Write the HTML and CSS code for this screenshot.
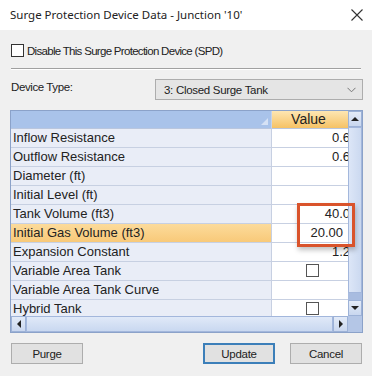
FILE: index.html
```html
<!DOCTYPE html>
<html lang="en">
<head>
    <meta charset="UTF-8">
    <title>Surge Protection Device Data</title>
    <link rel="stylesheet" href="styles.css">
</head>
<body>
    <div class="window">
        <header class="titlebar">
            <span>Surge Protection Device Data - Junction '10'</span>
            <svg class="close" width="12" height="12" viewBox="0 0 12 12">
                <path d="M0.5 0.5 L11.5 11.5 M11.5 0.5 L0.5 11.5" stroke="#333" stroke-width="1.1" fill="none"/>
            </svg>
        </header>

        <div class="content">
            <label class="spd">
                <span class="box"></span>
                Disable This Surge Protection Device (SPD)
            </label>

            <div class="sep"></div>

            <div class="type-row">
                <span class="type-label">Device Type:</span>
                <div class="select">
                    <span>3: Closed Surge Tank</span>
                    <svg width="9" height="6" viewBox="0 0 9 6">
                        <path d="M0.5 0.8 L4.5 4.8 L8.5 0.8" stroke="#777" stroke-width="1" fill="none"/>
                    </svg>
                </div>
            </div>

            <!-- Grilla de propiedades -->
            <div class="grid">
                <div class="grid-body">
                    <div class="grid-view">
                        <div class="table">
                            <div class="row head">
                                <div class="cell name"><span class="sort"></span></div>
                                <div class="cell value">Value</div>
                            </div>
                            <div class="row">
                                <div class="cell name">Inflow Resistance</div>
                                <div class="cell value">0.6</div>
                            </div>
                            <div class="row">
                                <div class="cell name">Outflow Resistance</div>
                                <div class="cell value">0.6</div>
                            </div>
                            <div class="row">
                                <div class="cell name">Diameter (ft)</div>
                                <div class="cell value"></div>
                            </div>
                            <div class="row">
                                <div class="cell name">Initial Level (ft)</div>
                                <div class="cell value"></div>
                            </div>
                            <div class="row">
                                <div class="cell name">Tank Volume (ft3)</div>
                                <div class="cell value">40.0</div>
                            </div>
                            <div class="row selected">
                                <div class="cell name">Initial Gas Volume (ft3)</div>
                                <div class="cell value editing">20.00</div>
                            </div>
                            <div class="row">
                                <div class="cell name">Expansion Constant</div>
                                <div class="cell value">1.2</div>
                            </div>
                            <div class="row">
                                <div class="cell name">Variable Area Tank</div>
                                <div class="cell value check"><span class="box"></span></div>
                            </div>
                            <div class="row">
                                <div class="cell name">Variable Area Tank Curve</div>
                                <div class="cell value"></div>
                            </div>
                            <div class="row">
                                <div class="cell name">Hybrid Tank</div>
                                <div class="cell value check"><span class="box"></span></div>
                            </div>
                        </div>
                    </div>
                    <div class="vscroll">
                        <div class="sb-btn"><span class="arrow up"></span></div>
                        <div class="sb-thumb"></div>
                        <div class="sb-track"></div>
                        <div class="sb-btn"><span class="arrow down"></span></div>
                    </div>
                </div>
                <div class="hscroll">
                    <div class="sb-btn"><span class="arrow left"></span></div>
                    <div class="sb-thumb"></div>
                    <div class="sb-btn"><span class="arrow right"></span></div>
                    <div class="corner"></div>
                </div>
                <div class="mark"></div>
            </div>

            <div class="buttons">
                <button>Purge</button>
                <span class="spacer"></span>
                <button class="default">Update</button>
                <button>Cancel</button>
            </div>
        </div>
    </div>
</body>
</html>
```

FILE: styles.css
```css
/* Ventana */
body {
    margin: 0;
    font-family: 'Liberation Sans', Arial, sans-serif;
    font-size: 11px;
    letter-spacing: -0.2px;
    color: #222;
    background: #f0f0f0;
}

.window {
    width: 372px;
    height: 376px;
    background: #f0f0f0;
}

.titlebar {
    height: 30px;
    background: #fff;
    display: flex;
    align-items: center;
    justify-content: space-between;
    padding: 0 9px 1px 10px;
    box-sizing: border-box;
    font-family: 'Noto Sans', sans-serif;
    font-size: 11.5px;
    letter-spacing: 0;
    color: #222;
}

.content {
    padding: 14px 10px 0 11px;
}

/* Checkbox superior */
.spd {
    display: flex;
    align-items: center;
    height: 13px;
    gap: 3px;
    font-size: 11.5px;
    letter-spacing: -0.7px;
}

.box {
    display: inline-block;
    width: 11px;
    height: 11px;
    border: 1px solid #333;
    background: #fff;
}

.sep {
    margin-top: 11px;
    height: 1px;
    background: #a0a0a0;
    border-bottom: 1px solid #fff;
    margin-right: 1px;
}

.type-row {
    margin-top: 9px;
    display: flex;
    align-items: center;
    justify-content: space-between;
}

.type-label {
    padding-bottom: 5px;
    font-size: 11.5px;
    letter-spacing: -0.4px;
}

.select {
    width: 208px;
    height: 21px;
    box-sizing: border-box;
    border: 1px solid #adadad;
    background: #e5e5e5;
    display: flex;
    align-items: center;
    justify-content: space-between;
    padding: 0 6px 0 8px;
    margin-right: -1px;
    font-size: 11.5px;
    letter-spacing: -0.3px;
}

/* Grilla */
.grid {
    position: relative;
    margin-top: 10px;
    margin-left: -1px;
    width: 351px;
    border: 1px solid #8ba2c9;
    font-size: 13px;
    letter-spacing: 0;
}

.grid-body {
    display: flex;
    height: 205px;
}

.grid-view {
    flex: 1;
    overflow: hidden;
}

.table {
    width: 339px;
}

.row {
    display: grid;
    grid-template-columns: 261px 78px;
    height: 19px;
}

.cell {
    line-height: 18px;
    border-bottom: 1px solid #c7d0e2;
    white-space: nowrap;
    overflow: hidden;
}

.cell.name {
    background: #e9edf7;
    padding-left: 2px;
    border-right: 1px solid #c7d0e2;
}

.cell.value {
    background: #fff;
    text-align: right;
}

.cell.value.editing {
    padding-right: 7px;
}

.cell.check {
    text-align: left;
    padding-left: 34px;
}

.cell.check .box {
    vertical-align: -2px;
    border-color: #555;
}

.row.head {
    height: 18px;
}

.row.head .cell {
    border-bottom: 1px solid #b9c6de;
}

.row.head .name {
    background: #a9c3ea;
    position: relative;
    border-right: 1px solid #c5d3ea;
}

.sort {
    position: absolute;
    right: 3px;
    bottom: 3px;
    width: 0;
    height: 0;
    border-left: 7px solid transparent;
    border-bottom: 7px solid #d6e2f5;
}

.row.head .value {
    background: linear-gradient(#fde6b2, #f6c265);
    text-align: center;
    padding-right: 5px;
    font-size: 14px;
    line-height: 17px;
}

.row.selected .name {
    background: linear-gradient(#fcdb9b, #f8c979);
}

/* Barras de desplazamiento */
.vscroll {
    width: 14px;
    display: flex;
    flex-direction: column;
    background: #c6d5ee;
}

.sb-btn {
    height: 16px;
    display: flex;
    align-items: center;
    justify-content: center;
    background: linear-gradient(#e3ebf8, #c9d7ef);
    border: 1px solid #9db2d7;
    box-sizing: border-box;
}

.sb-thumb {
    flex: 1;
    background: linear-gradient(90deg, #dce6f7, #cbd9f0);
    border: 1px solid #a3b7dc;
}

.vscroll .sb-track {
    height: 7px;
    background: #a8bce0;
}

.arrow {
    width: 0;
    height: 0;
}

.arrow.up {
    border: 4px solid transparent;
    border-bottom: 4px solid #222;
    border-top: 0;
}

.arrow.down {
    border: 4px solid transparent;
    border-top: 4px solid #222;
    border-bottom: 0;
}

.arrow.left {
    border: 4px solid transparent;
    border-right: 4px solid #222;
    border-left: 0;
}

.arrow.right {
    border: 4px solid transparent;
    border-left: 4px solid #222;
    border-right: 0;
}

.hscroll {
    display: flex;
    height: 16px;
    background: #c6d5ee;
}

.hscroll .sb-btn {
    width: 15px;
    height: 16px;
}

.hscroll .sb-thumb {
    background: linear-gradient(#e0e9f8, #c9d8f0);
}

.hscroll .corner {
    width: 14px;
    background: #b4c6e6;
}

/* Marca roja */
.mark {
    position: absolute;
    left: 286px;
    top: 92px;
    width: 52px;
    height: 38px;
    border: 3px solid #d9532b;
    box-shadow: 1px 3px 5px rgba(0, 0, 0, 0.25);
}

/* Botones */
.buttons {
    margin-top: 10px;
    display: flex;
    gap: 15px;
}

.spacer {
    flex: 1;
}

button {
    width: 72px;
    height: 21px;
    border: 1px solid #adadad;
    background: #e1e1e1;
    font-family: 'Liberation Sans', Arial, sans-serif;
    font-size: 11.5px;
    letter-spacing: -0.3px;
    color: #222;
    padding: 0;
}

button.default {
    border: 2px solid #3c7fb9;
}
```
